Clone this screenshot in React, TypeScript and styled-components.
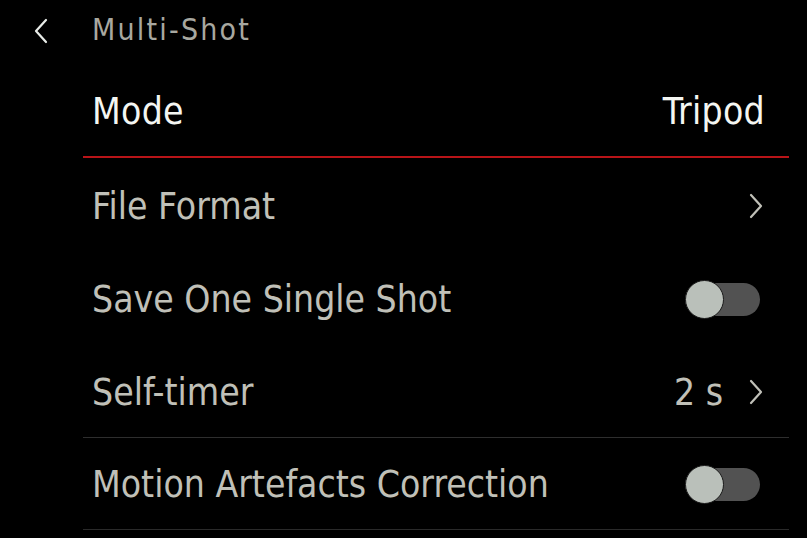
import styled, { createGlobalStyle } from "styled-components";

const GlobalStyle = createGlobalStyle`
  html, body {
    margin: 0;
    padding: 0;
    background: #000;
  }
  body {
    font-family: "DejaVu Sans", "Liberation Sans", sans-serif;
    font-stretch: condensed;
  }
`;

type Row =
  | { label: string; kind: "chevron"; value?: string }
  | { label: string; kind: "toggle"; on: boolean };

const rows: Row[] = [
  { label: "File Format", kind: "chevron" },
  { label: "Save One Single Shot", kind: "toggle", on: false },
  { label: "Self-timer", kind: "chevron", value: "2 s" },
  { label: "Motion Artefacts Correction", kind: "toggle", on: false },
];

const Chevron = ({ dir }: { dir: "left" | "right" }) => (
  <svg width="16" height="26" viewBox="0 0 16 26" fill="none">
    <path
      d={dir === "left" ? "M13 2 L3 13 L13 24" : "M3 2 L13 13 L3 24"}
      stroke="currentColor"
      strokeWidth="2.2"
      strokeLinecap="round"
      strokeLinejoin="round"
    />
  </svg>
);

export default function App() {
  return (
    <Screen>
      <GlobalStyle />
      <Header>
        <BackButton>
          <Chevron dir="left" />
        </BackButton>
        <Title>Multi-Shot</Title>
      </Header>
      <List>
        <ModeRow>
          <ModeLabel>Mode</ModeLabel>
          <ModeLabel>Tripod</ModeLabel>
        </ModeRow>
        {rows.map((row, i) => (
          <Item key={row.label} $divider={i === 3} $last={i === rows.length - 1}>
            <Label>{row.label}</Label>
            <Right>
              {row.kind === "chevron" ? (
                <>
                  {row.value && <Value>{row.value}</Value>}
                  <ArrowWrap>
                    <Chevron dir="right" />
                  </ArrowWrap>
                </>
              ) : (
                <Toggle $on={row.on}>
                  <Knob $on={row.on} />
                </Toggle>
              )}
            </Right>
          </Item>
        ))}
      </List>
    </Screen>
  );
}

const Screen = styled.div`
  width: 807px;
  height: 538px;
  background: #000;
  overflow: hidden;
  color: #c0c0b8;
`;

const Header = styled.div`
  display: flex;
  align-items: center;
  height: 59px;
  padding-left: 33px;
`;

const BackButton = styled.div`
  width: 59px;
  display: flex;
  align-items: center;
  color: #e8ece8;
  margin-top: 2px;
`;

const Title = styled.div`
  font-size: 30px;
  color: #a8a8a0;
  letter-spacing: 2.2px;
`;

const List = styled.div`
  margin-left: 83px;
  margin-right: 18px;
`;

const ModeRow = styled.div`
  display: flex;
  justify-content: space-between;
  align-items: center;
  height: 99px;
  box-sizing: border-box;
  padding: 8px 24px 0 9px;
  border-bottom: 2px solid #b81418;
`;

const ModeLabel = styled.div`
  font-size: 37px;
  color: #f4f6f2;
  letter-spacing: 0.3px;
`;

const Item = styled.div<{ $divider: boolean; $last: boolean }>`
  display: flex;
  justify-content: space-between;
  align-items: center;
  height: 93px;
  box-sizing: border-box;
  padding: 2px 25px 0 9px;
  border-top: 1px solid ${(p) => (p.$divider ? "#2e2e2e" : "transparent")};
  border-bottom: ${(p) => (p.$last ? "1px solid #2a2a2a" : "none")};
`;

const Label = styled.div`
  font-size: 37px;
  color: #c0c0b8;
  letter-spacing: 0;
`;

const Right = styled.div`
  display: flex;
  align-items: center;
  gap: 25px;
`;

const Value = styled.div`
  font-size: 37px;
  color: #c0c0b8;
`;

const ArrowWrap = styled.div`
  display: flex;
  color: #c0c0b8;
`;

const Toggle = styled.div<{ $on: boolean }>`
  position: relative;
  width: 75px;
  height: 33px;
  margin-right: 4px;
  border-radius: 17px;
  background: ${(p) => (p.$on ? "#b81418" : "#525252")};
`;

const Knob = styled.div<{ $on: boolean }>`
  position: absolute;
  top: -3px;
  left: ${(p) => (p.$on ? "36px" : "0")};
  width: 39px;
  height: 39px;
  box-sizing: border-box;
  border-radius: 50%;
  background: #bac0ba;
  border: 1.5px solid #1a1a1a;
`;
